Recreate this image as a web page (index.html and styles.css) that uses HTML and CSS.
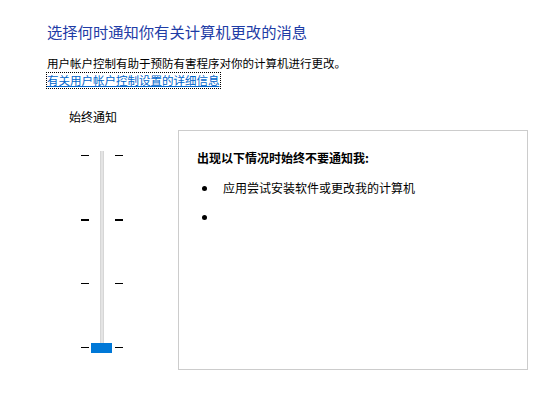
FILE: index.html
```html
<!DOCTYPE html>
<html lang="zh-CN">
<head>
    <meta charset="UTF-8">
    <title>用户帐户控制设置</title>
    <link rel="stylesheet" href="styles.css">
</head>
<body>
    <div class="page">
        <h1 class="title">选择何时通知你有关计算机更改的消息</h1>
        <div class="intro">
            <p>用户帐户控制有助于预防有害程序对你的计算机进行更改。</p>
            <a href="#" class="more-link">有关用户帐户控制设置的详细信息</a>
        </div>

        <div class="main">
            <div class="slider-col">
                <div class="slider-label">始终通知</div>
                <div class="slider">
                    <div class="track"></div>
                    <div class="tick-row"><span class="tick"></span><span class="tick"></span></div>
                    <div class="tick-row bold"><span class="tick"></span><span class="tick"></span></div>
                    <div class="tick-row"><span class="tick"></span><span class="tick"></span></div>
                    <div class="tick-row last"><span class="tick"></span><span class="tick"></span></div>
                    <div class="thumb"></div>
                </div>
            </div>

            <div class="info-box">
                <div class="info-title">出现以下情况时始终不要通知我:</div>
                <ul class="info-list">
                    <li>应用尝试安装软件或更改我的计算机</li>
                    <li>&nbsp;</li>
                </ul>
            </div>
        </div>
    </div>
</body>
</html>
```

FILE: styles.css
```css
body {
    margin: 0;
    background: #fff;
    color: #000;
    font-family: "Noto Sans CJK SC", "Noto Sans", sans-serif;
}
.page {
    padding: 21px 0 0 47px;
}
/* Header */
.title {
    margin: 0;
    font-size: 15.3px;
    font-weight: normal;
    line-height: 20px;
    color: #1e3ca6;
}
.intro {
    margin-top: 15px;
    font-size: 11.5px;
    line-height: 15px;
}
.intro p {
    margin: 0;
}
.more-link {
    display: inline-block;
    margin-top: 2px;
    color: #0066cc;
    text-decoration: underline;
    outline: 1px dotted #000;
    outline-offset: 0;
}
/* Slider + box */
.main {
    display: flex;
    margin-top: 20px;
}
.slider-col {
    width: 131px;
}
.slider-label {
    margin-left: 22px;
    font-size: 12px;
    line-height: 17px;
}
.slider {
    position: relative;
    width: 42px;
    margin: 26px 0 0 34px;
    padding: 4px 0 5px;
}
.track {
    position: absolute;
    left: 19px;
    top: 0;
    bottom: 0;
    width: 4px;
    box-sizing: border-box;
    background: #e4e4e4;
    border-left: 1px solid #d6d6d6;
    border-right: 1px solid #d6d6d6;
}
.tick-row {
    display: flex;
    justify-content: space-between;
    height: 64px;
}
.tick-row.last {
    height: auto;
}
.tick {
    width: 8px;
    height: 1px;
    background: #000;
}
.tick-row.bold .tick {
    height: 2px;
}
.thumb {
    position: absolute;
    left: 10px;
    bottom: 0;
    width: 21px;
    height: 10px;
    background: #0078d7;
}
.info-box {
    width: 350px;
    height: 240px;
    box-sizing: border-box;
    margin-top: 22px;
    border: 1px solid #cccccc;
    padding: 19px 0 0 18px;
}
.info-title {
    font-size: 12px;
    font-weight: bold;
    line-height: 16px;
}
.info-list {
    list-style: none;
    margin: 14px 0 0;
    padding: 0 0 0 5px;
    font-size: 12px;
    line-height: 16px;
}
.info-list li {
    display: flex;
    align-items: center;
    margin-bottom: 13px;
}
.info-list li::before {
    content: "";
    flex: none;
    width: 5px;
    height: 5px;
    margin-right: 16px;
    border-radius: 50%;
    background: #000;
}
```
